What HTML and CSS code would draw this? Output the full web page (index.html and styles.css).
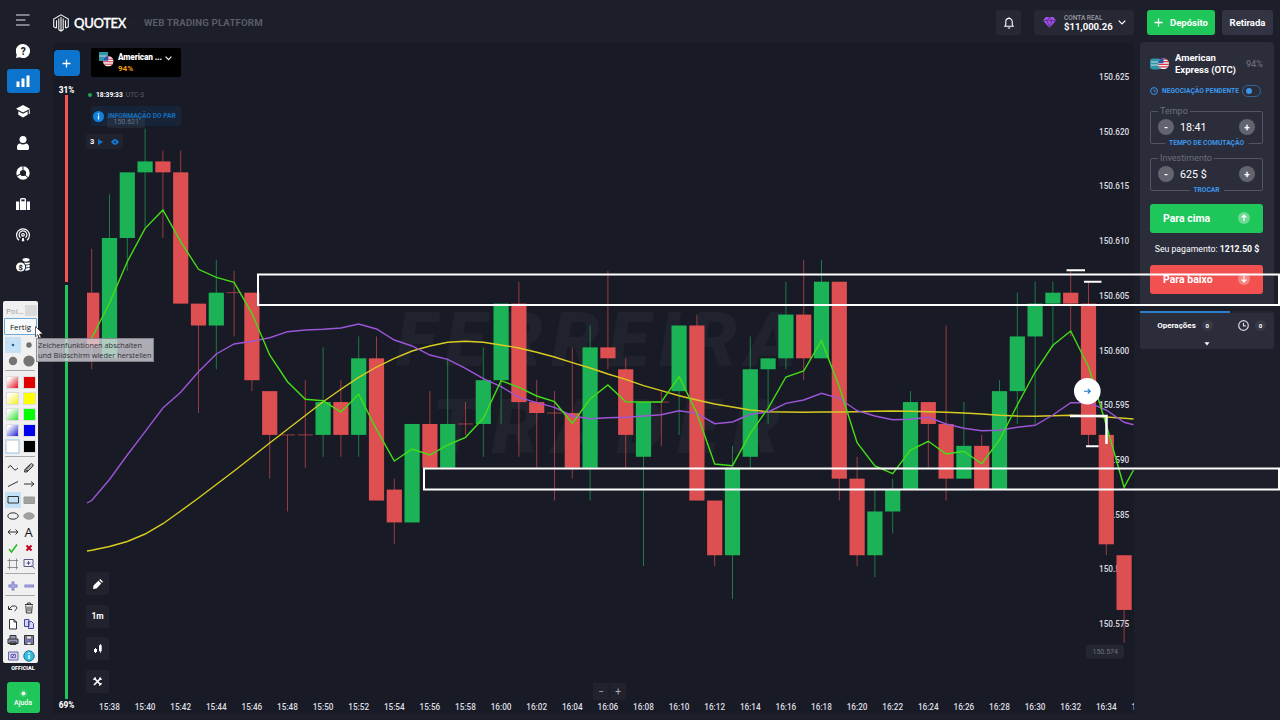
FILE: index.html
```html
<!DOCTYPE html>
<html lang="pt">
  <head>
    <meta charset="utf-8">
    <title>QUOTEX</title>
    <link rel="stylesheet" href="styles.css">
  </head>
  <body>
    <nav class="sidebar">
      <svg class="menuIcon" width="14" height="12" viewBox="0 0 14 12"><path d="M0 1h13.500M0 6h9.500M0 11h13.500" stroke="#e3e4e8" stroke-width="1.200"/></svg>
      <a class="navItem"><svg width="14" height="14" viewBox="0 0 14 14"><path d="M7 0a7 7 0 1 1-3.200 13.200L0 14l.7-3.500A7 7 0 0 1 7 0z" fill="#fff"/><text x="7.200" y="10.600" text-anchor="middle" class="glyph">?</text></svg></a>
      <a class="navItem active"><svg width="14" height="12" viewBox="0 0 14 12"><path d="M0.500 6.500h3V12h-3zM5.500 3.500h3V12h-3zM10.500 0.500h3V12h-3z" fill="#fff"/></svg></a>
      <a class="navItem"><svg width="14" height="13" viewBox="0 0 14 13"><path d="M7 0l7 3.800-7 3.800L0 3.800zM2.300 6.200L7 8.800l4.700-2.600v3.600L7 12.400 2.300 9.800zM12.800 4.500h1V9h-1z" fill="#fff"/></svg></a>
      <a class="navItem"><svg width="12" height="14" viewBox="0 0 12 14"><circle cx="6" cy="3.600" r="3.500" fill="#fff"/><path d="M0 11c0-2.300 1.500-3.600 3-3.600.9.700 1.900 1 3 1s2.100-.3 3-1c1.500 0 3 1.300 3 3.600v1.400c0 .9-.6 1.500-1.500 1.500h-9C.6 13.900 0 13.300 0 12.400z" fill="#fff"/></svg></a>
      <a class="navItem"><svg width="14" height="14" viewBox="0 0 14 14"><circle cx="7" cy="7" r="4.900" fill="none" stroke="#fff" stroke-width="3.600"/><path d="M7 0v4M8.500 8.500l3.800 3.300M4.800 8L.8 10" stroke="#1d1f2a" stroke-width="1"/></svg></a>
      <a class="navItem"><svg width="14" height="12" viewBox="0 0 14 12"><path d="M0 3.500h3V12H0zM3.800 3.500H4V1.500Q4 0 5.500 0h3Q10 0 10 1.500v2h.2V12H3.800zM11 3.500h3V12h-3z" fill="#fff"/><path d="M5.400 3.300V1.400h3.200v1.900z" fill="#1d1f2a"/></svg></a>
      <a class="navItem"><svg width="14" height="14" viewBox="0 0 14 14" fill="none" stroke="#fff" stroke-width="1.200"><path d="M3 12.200a6.400 6.400 0 1 1 8 0M4.500 9.800a3.900 3.900 0 1 1 5 0"/><circle cx="7" cy="6.800" r="1.300"/><path d="M5.700 13.300L6.200 10h1.600l.5 3.300z" fill="#fff" stroke="none"/></svg></a>
      <a class="navItem"><svg width="14" height="14" viewBox="0 0 14 14"><path d="M6.500 1.800C6.500.8 8.200 0 10 0s3.700.8 3.700 1.800-1.700 1.900-3.700 1.900-3.500-.9-3.500-1.900zM8 4.400c2 .6 4.300.4 5.700-.5v1.800c-1 .8-2.600 1-4.300.9zM10 7.500c1.500 0 2.800-.3 3.700-.8v1.800c-1 .7-2 .9-3.500.9zM10 10.300c1.500 0 2.800-.2 3.700-.8v2.100c-1 .8-2.600 1.200-4.600 1z" fill="#fff"/><circle cx="4.600" cy="9" r="4.600" fill="#fff"/><text x="4.600" y="11.700" text-anchor="middle" class="glyph small">$</text></svg></a>
      <span class="official">OFFICIAL</span>
      <button class="helpButton"><svg width="9" height="9" viewBox="0 0 9 9"><circle cx="4.500" cy="4.500" r="2" fill="#fff"/><circle cx="4.500" cy="4.500" r="3.300" fill="none" stroke="#8fe3ae" stroke-width=".7" stroke-dasharray="1 1"/></svg>Ajuda</button>
    </nav>

    <div class="main">
      <header class="topbar">
        <svg width="16" height="18" viewBox="0 0 16 18" fill="none" stroke="#f2f2f4" stroke-width="1.100"><path d="M3 14L.7 12.700V5L8 .8 15.300 5v7.700L13 14M3.500 6.300v8M5.800 4.500v11M8 3v13.800M10.200 4.500v11M12.500 6.300v8M5.500 15.500L8 17l2.500-1.500"/></svg>
        <span class="brand">QUOTEX</span>
        <span class="dot">·</span>
        <span class="tagline">WEB TRADING PLATFORM</span>
        <button class="bell"><svg width="10" height="12" viewBox="0 0 10 12" fill="none" stroke="#fff" stroke-width="1.100"><path d="M.8 9.200h8.400L8.200 7.700V4.600a3.200 3.200 0 0 0-6.400 0v3.100zM3.800 11h2.400M5 .3v1"/></svg></button>
        <div class="account">
          <svg width="13" height="11" viewBox="0 0 13 11"><path d="M2.700 0h7.600L13 3.600 6.500 11 0 3.600z" fill="#a04fe8"/><path d="M0 3.600h13M4.200 3.600L6.500 11l2.300-7.400L6.500 0z" fill="none" stroke="#4b2a75" stroke-width=".7"/></svg>
          <div class="balance"><small>CONTA REAL</small><b>$11,000.26</b></div>
          <svg width="8" height="5" viewBox="0 0 8 5"><path d="M.7.7L4 4 7.300.7" fill="none" stroke="#fff" stroke-width="1.200"/></svg>
        </div>
        <button class="deposit"><svg width="9" height="9" viewBox="0 0 9 9"><path d="M4.500.5v8M.5 4.500h8" stroke="#fff" stroke-width="1.300"/></svg>Depósito</button>
        <button class="withdraw">Retirada</button>
      </header>

      <div class="content">
        <section class="chartArea">
          <div class="sentiment">
            <button class="addTab"><svg width="9" height="9" viewBox="0 0 9 9"><path d="M4.500.5v8M.5 4.500h8" stroke="#fff" stroke-width="1.300"/></svg></button>
            <b>31%</b>
            <div class="barDown"></div>
            <div class="barUp"></div>
            <b>69%</b>
          </div>
          <svg id="chart" class="chart" width="1054" height="671" viewBox="80 43 1054 671"></svg>

          <div class="chartInfo">
            <div class="assetTab">
              <svg width="16" height="16" viewBox="0 0 16 16"><use href="#assetIcon"/></svg>
              <div><b>American ...</b><em>94%</em></div>
              <svg width="7" height="5" viewBox="0 0 7 5"><path d="M.6.7l2.900 2.900L6.400.7" fill="none" stroke="#fff" stroke-width="1.100"/></svg>
            </div>
            <div class="clock"><i></i><b>18:39:33</b> UTC-3</div>
            <div class="pairInfo"><svg width="11" height="11" viewBox="0 0 11 11"><circle cx="5.500" cy="5.500" r="5.500" fill="#1380dc"/><path d="M5.500 2.300v1.300M5.500 4.600v3.900" stroke="#fff" stroke-width="1.300"/></svg><span>INFORMAÇÃO DO PAR</span></div>
            <div class="indicators"><b>3</b><svg width="5" height="6" viewBox="0 0 5 6"><path d="M0 0l5 3-5 3z" fill="#1376ce"/></svg><svg width="8" height="6" viewBox="0 0 8 6"><path d="M0 3q4-6 8 0-4 6-8 0z" fill="#1376ce"/><circle cx="4" cy="3" r="1.100" fill="#1b2434"/></svg></div>
          </div>

          <div class="chartTools">
            <button><svg width="10" height="10" viewBox="0 0 10 10"><path d="M0 10l.5-3.500L5.400 1.700l2.800 2.800L3.500 9.500zM6.200 1L7.200 0 10 2.800l-1 1z" fill="#fff"/></svg></button>
            <button>1m</button>
            <button><svg width="8" height="9" viewBox="0 0 8 9"><path d="M0 5h3v3H0zM5 1.200h2.700v6H5zM1 4h1v5H1zM6 0h.8v8.800H6z" fill="#fff"/></svg></button>
            <button><svg width="9" height="9" viewBox="0 0 9 9"><path d="M1 1l7 7M8 1L1 8" stroke="#fff" stroke-width="1.700"/><path d="M0 2.500l2.500-.3L2.300 0M9 2.500L6.700 2.200 7 0M6.500 9l.3-2.500L9 6.500" stroke="#fff" fill="none" stroke-width=".8"/></svg></button>
          </div>
          <div class="zoomButtons"><button>−</button><button>+</button></div>
        </section>

        <aside class="side">
          <div class="tradePanel">
            <div class="asset">
              <svg width="20" height="14" viewBox="0 0 20 14"><rect y="1.500" width="11" height="11" rx="3" fill="#3295a6"/><path d="M1 5h7M1 8h7" stroke="#bfe0e4" stroke-width="1"/><g transform="translate(8 1.300)"><use href="#flag"/></g></svg>
              <b>American<br>Express (OTC)</b>
              <span>94%</span>
            </div>
            <div class="pending"><svg width="8" height="8" viewBox="0 0 8 8" fill="none" stroke="#3b97ea"><circle cx="4" cy="4" r="3.400"/><path d="M4 2v2.300h1.700" stroke-width=".8"/></svg><span>NEGOCIAÇÃO PENDENTE</span><i class="toggle"></i></div>
            <fieldset class="field">
              <legend>Tempo</legend>
              <button>-</button><span>18:41</span><button>+</button>
              <a>TEMPO DE COMUTAÇÃO</a>
            </fieldset>
            <fieldset class="field">
              <legend>Investimento</legend>
              <button>-</button><span>625 $</span><button>+</button>
              <a>TROCAR</a>
            </fieldset>
            <button class="trade up">Para cima<svg width="12" height="12" viewBox="0 0 12 12"><circle cx="6" cy="6" r="6" fill="#fff" opacity=".35"/><path d="M6 9.200V3.200M3.600 5.500L6 3.100l2.400 2.400" fill="none" stroke="#fff" stroke-width="1.200"/></svg></button>
            <p class="payout">Seu pagamento: <b>1212.50 $</b></p>
            <button class="trade down">Para baixo<svg width="12" height="12" viewBox="0 0 12 12"><circle cx="6" cy="6" r="6" fill="#fff" opacity=".3"/><path d="M6 2.800v6M3.600 6.500L6 8.900l2.400-2.400" fill="none" stroke="#fff" stroke-width="1.200"/></svg></button>
          </div>
          <div class="operations">
            <div class="tabs">
              <div class="tab selected">Operações <i>0</i></div>
              <div class="tab"><svg width="11" height="11" viewBox="0 0 11 11" fill="none" stroke="#d8d9de" stroke-width="1.200"><circle cx="5.500" cy="5.500" r="4.800"/><path d="M5.500 2.800v3h2.300"/></svg><i>0</i></div>
            </div>
            <svg width="6" height="4" viewBox="0 0 6 4"><path d="M.5.300h5L3 3.600z" fill="#fff"/></svg>
          </div>
        </aside>
      </div>
    </div>

    <!-- shapes drawn with the pointer tool, over everything -->
    <svg class="drawing" width="1280" height="720" fill="none" stroke="#fff" stroke-width="2">
      <rect x="258" y="274.500" width="1021" height="30.500"/>
      <rect x="424" y="468.500" width="855" height="21"/>
      <path d="M1066.500 270.300h18.500M1084 281.700h17.500M1086 446.300h12.500"/>
      <path d="M1070 416h36.500v28" stroke-width="2.500"/>
    </svg>

    <div class="pointerTool">
      <div class="title"><span>Poi...</span><i></i></div>
      <div class="fertig">Fertig</div>
      <div class="cells dots">
        <i class="picked"><svg viewBox="0 0 16 16"><circle cx="8" cy="8" r="1.300" fill="#27628f"/></svg></i>
        <i><svg viewBox="0 0 16 16"><circle cx="8" cy="8" r="2.700" fill="#6f6f6f"/></svg></i>
        <i><svg viewBox="0 0 16 16"><circle cx="8" cy="8" r="4.200" fill="#747474"/></svg></i>
        <i><svg viewBox="0 0 16 16"><circle cx="8" cy="8" r="5.600" fill="#747474"/></svg></i>
      </div>
      <hr>
      <div class="cells swatches">
        <i class="fadeRed"></i><i class="red"></i>
        <i class="fadeYellow"></i><i class="yellow"></i>
        <i class="fadeGreen"></i><i class="green"></i>
        <i class="fadeBlue"></i><i class="blue"></i>
        <i class="white"></i><i class="black"></i>
      </div>
      <hr>
      <div class="cells icons">
        <i><svg viewBox="0 0 16 16"><path d="M3 8q2-4 4-1t3 3 3-2"/></svg></i>
        <i><svg viewBox="0 0 16 16"><path d="M3.500 12L4 9.500 9.500 4q1-1 2 0t.5 2L6 12zM4 9.500l3 1.500M9 5L5.500 9" fill="#b5b5b5"/></svg></i>
        <i><svg viewBox="0 0 16 16"><path d="M3 10.500l10-5"/></svg></i>
        <i><svg viewBox="0 0 16 16"><path d="M3 8h10M10 5.500L13 8l-3 2.500"/></svg></i>
        <i class="picked"><svg viewBox="0 0 16 16"><path d="M3 4.500h10.500v6.500H3z"/></svg></i>
        <i><svg viewBox="0 0 16 16"><path d="M3 5h10.500v6.500H3z" fill="#a0a0a0" stroke="#999"/></svg></i>
        <i><svg viewBox="0 0 16 16"><ellipse cx="8" cy="8" rx="5.200" ry="3.200"/></svg></i>
        <i><svg viewBox="0 0 16 16"><ellipse cx="8" cy="8" rx="5.200" ry="3.200" fill="#a0a0a0" stroke="#999"/></svg></i>
        <i><svg viewBox="0 0 16 16"><path d="M3 8h10M5.500 5.500L3 8l2.500 2.500M10.500 5.500L13 8l-2.500 2.500"/></svg></i>
        <i class="letter">A</i>
        <i><svg viewBox="0 0 16 16"><path d="M4 9l2.500 3L12 4.500" stroke="#20bb20" stroke-width="1.500"/></svg></i>
        <i><svg viewBox="0 0 16 16"><path d="M5.500 5.500l5 5M10.500 5.500l-5 5" stroke="#c00020" stroke-width="2"/></svg></i>
        <i><svg viewBox="0 0 16 16"><path d="M2.500 11.500h10.500M2.500 4.500h10.500M4.500 2.500v11M11.500 2.500v11" stroke="#777" stroke-width=".8"/></svg></i>
        <i><svg viewBox="0 0 16 16"><path d="M3 3.500h9v7H3zM10.500 9.500l3 3" stroke="#5a5a88"/><path d="M7.500 5.200v3.600M5.700 7h3.600" stroke="#4040a0"/></svg></i>
      </div>
      <hr>
      <div class="cells icons one">
        <i><svg viewBox="0 0 16 16"><path d="M8 3.500v9M3.500 8h9" stroke="#7272bd" stroke-width="2.800"/><path d="M8 4.300v7.400M4.300 8h7.400" stroke="#bfbff2"/></svg></i>
        <i><svg viewBox="0 0 16 16"><path d="M3.500 8h9.500" stroke="#7272bd" stroke-width="2.800"/><path d="M4.300 8h7.900" stroke="#bfbff2"/></svg></i>
      </div>
      <hr>
      <div class="cells icons last">
        <i><svg viewBox="0 0 16 16"><path d="M3.500 6v3.500H7M4 9q3-4.500 6.500-3 3 2-1 5"/></svg></i>
        <i><svg viewBox="0 0 16 16"><path d="M4 4.500h8M6.500 4.500V3h3v1.500M4.800 5.500l.6 7.500h5.200l.6-7.500M7 6.500v5M9 6.500v5"/></svg></i>
        <i><svg viewBox="0 0 16 16"><path d="M4.500 3.500H9L11.500 6v7h-7zM9 3.500V6h2.500" fill="#fff"/></svg></i>
        <i><svg viewBox="0 0 16 16"><path d="M3.500 3.500H8v7H3.500zM7.500 5.500h3l2 2v5h-5z" fill="#d6d6f4" stroke="#4646a0"/></svg></i>
        <i><svg viewBox="0 0 16 16"><path d="M5 7V3.500h6V7M3 7h10v4.500H3zM5 10h6v2.500H5z" fill="#9696b8"/></svg></i>
        <i><svg viewBox="0 0 16 16"><path d="M3.500 3.500h9v9h-9z" fill="#7a7ab8"/><path d="M5.500 4h5v3h-5zM6 10h4v2.500H6z" fill="#e8e8e8" stroke-width=".5"/></svg></i>
        <i><svg viewBox="0 0 16 16"><path d="M3.500 4h9.500v8H3.500z" fill="#d5d5ef" stroke="#6565a5"/><path d="M6 6.500h4.500v3H6zM7 9l3-3" stroke="#4646a0" stroke-width=".8"/></svg></i>
        <i><svg viewBox="0 0 16 16"><circle cx="8" cy="8" r="5.200" fill="#35bce0" stroke="#16779a"/><path d="M8 4.500V6M8 7v4" stroke="#fff" stroke-width="1.400"/></svg></i>
      </div>
    </div>
    <div class="hint">Zeichenfunktionen abschalten<br>und Bildschirm wieder herstellen</div>
    <svg class="cursor" width="9" height="13" viewBox="0 0 9 13"><path d="M.5.500v10.300l2.400-2.200 1.600 3.700 1.700-.7-1.600-3.600h3.400z" fill="#fff" stroke="#222" stroke-width=".7"/></svg>

    <svg width="0" height="0" class="defs">
      <defs>
        <clipPath id="round"><circle cx="5.500" cy="5.500" r="5.500"/></clipPath>
        <g id="flag" clip-path="url(#round)"><path d="M0 0h11v11H0z" fill="#f4f0f2"/><path d="M0 .8h11M0 3.400h11M0 6h11M0 8.600h11" stroke="#d8344a" stroke-width="1.200"/><path d="M0 0h5.500v5H0z" fill="#2c56a5"/></g>
        <g id="assetIcon"><path d="M1 0h9v9H1z" fill="#3295a6"/><path d="M1.500 4h7" stroke="#bfe0e4"/><g transform="translate(5 4) scale(.96)"><use href="#flag"/></g></g>
      </defs>
    </svg>

    <script src="chart.js"></script>
  </body>
</html>
```
FILE: styles.css
```css
*{
  box-sizing: border-box;
}

body{
  margin: 0;
  width: 1280px;
  height: 720px;
  overflow: hidden;
  display: flex;
  background: #1c1e2a;
  color: #fff;
  font-family: Roboto, sans-serif;
  font-size: 9px;
}

button{
  border: 0;
  padding: 0;
  color: #fff;
  font-family: inherit;
  display: flex;
  align-items: center;
  justify-content: center;
}

i, em{
  font-style: normal;
}

svg{
  display: block;
  flex: none;
}

.defs{
  position: absolute;
}

/* left menu */
.sidebar{
  width: 46px;
  height: 720px;
  flex: none;
  display: flex;
  flex-direction: column;
  align-items: center;
  padding-top: 14px;
}

.menuIcon{
  margin-bottom: 12.500px;
}

.navItem{
  width: 33px;
  height: 24px;
  margin-bottom: 6.700px;
  border-radius: 3px;
  display: flex;
  align-items: center;
  justify-content: center;
}

.navItem.active{
  background: #0d74cd;
}

.glyph{
  font-size: 10px;
  font-weight: 900;
  fill: #1d1f2a;
}

.glyph.small{
  font-size: 7.500px;
}

.official{
  margin-top: auto;
  font-size: 5.500px;
  line-height: 8px;
  font-weight: 900;
}

.helpButton{
  width: 33px;
  height: 31px;
  margin: 10px 0 7px;
  border-radius: 3px;
  background: #1fc75b;
  flex-direction: column;
  gap: 1px;
  font-size: 7px;
  font-weight: 500;
}

.main{
  flex: 1;
  display: flex;
  flex-direction: column;
  padding-left: 7px;
}

/* header */
.topbar{
  height: 43px;
  flex: none;
  display: flex;
  align-items: center;
  padding: 2px 7px 0 0;
}

.brand{
  margin-left: 5px;
  width: 49px;
  font-family: Lato, sans-serif;
  font-size: 13px;
  font-weight: 500;
  letter-spacing: -.3px;
  -webkit-text-stroke: .35px #fff;
}

.dot{
  width: 21px;
  text-align: center;
  color: #454753;
}

.tagline{
  color: #5a5c66;
  font-size: 9.700px;
  font-weight: 700;
  letter-spacing: .13px;
}

.bell, .account, .deposit, .withdraw{
  height: 25px;
  border-radius: 3px;
  background: #262834;
}

.bell{
  width: 25px;
  margin-left: auto;
}

.account{
  width: 100px;
  margin: 0 13px 0 13px;
  padding: 0 8px 0 9px;
  display: flex;
  align-items: center;
}

.balance{
  width: 55px;
  margin-left: 8px;
  display: flex;
  flex-direction: column;
  white-space: nowrap;
}

.balance small{
  color: #9b9ca5;
  font-size: 6.500px;
  line-height: 8px;
  font-weight: 500;
}

.balance b{
  font-size: 9.500px;
  line-height: 10px;
}

.deposit{
  width: 68px;
  margin-right: 7px;
  gap: 7px;
  background: #1fc75b;
  font-size: 9.500px;
  font-weight: 700;
}

.withdraw{
  width: 51px;
  background: #323443;
  font-size: 9.500px;
  font-weight: 700;
}

.content{
  display: flex;
  flex: 1;
}

/* chart */
.chartArea{
  position: relative;
  width: 1081px;
  height: 671px;
  display: flex;
  background: #181a25;
}

.sentiment{
  width: 27px;
  padding-top: 7px;
  display: flex;
  flex-direction: column;
  align-items: center;
  font-size: 8.300px;
  line-height: 10px;
}

.sentiment b{
  font-weight: 800;
}

.addTab{
  width: 26px;
  height: 26px;
  margin-bottom: 9px;
  border-radius: 4px;
  background: #0d74cd;
  flex: none;
}

.barDown{
  width: 3px;
  height: 187px;
  background: #f55555;
}

.barUp{
  width: 3px;
  height: 414px;
  margin: 3px 0 1px;
  background: #1fc75b;
}

.chart .axis{
  fill: #dddee2;
  font-size: 8.200px;
  font-weight: 500;
}

.chart .tag{
  fill: #70727c;
  font-size: 7px;
}

.chart .watermark{
  fill: #20222d;
  font-size: 76px;
  font-weight: 900;
  font-style: italic;
}

.chart polyline{
  fill: none;
  stroke-width: 1.400;
}

.chartInfo{
  position: absolute;
  left: 33px;
  top: 5px;
}

.assetTab{
  width: 90px;
  height: 29px;
  margin-left: 5px;
  padding: 4px 0 0 7px;
  border-radius: 2px;
  background: #000;
  display: flex;
}

.assetTab div{
  width: 47px;
  margin-left: 4px;
  display: flex;
  flex-direction: column;
  line-height: 11px;
  font-size: 8.300px;
  white-space: nowrap;
}

.assetTab b{
  font-weight: 900;
  letter-spacing: -.15px;
}

.assetTab em{
  color: #f59a0c;
  font-size: 8px;
  font-weight: 700;
}

.assetTab > svg:last-child{
  margin-top: 4px;
}

.clock{
  display: flex;
  align-items: center;
  gap: 3px;
  height: 8px;
  margin: 14px 0 0 2px;
  font-size: 6.700px;
  color: #5c5e69;
  white-space: nowrap;
}

.clock i{
  width: 4px;
  height: 4px;
  margin-right: 1px;
  border-radius: 2px;
  background: #1fa653;
}

.clock b{
  color: #fff;
}

.pairInfo{
  width: 90px;
  height: 20px;
  margin: 7px 0 0 5px;
  padding-left: 2px;
  display: flex;
  align-items: center;
  gap: 4px;
  border-radius: 3px;
  background: rgba(19, 128, 220, .1);
  color: #136fbe;
  font-size: 6.700px;
  font-weight: 700;
  white-space: nowrap;
}

.indicators{
  width: 37px;
  height: 15px;
  margin-top: 8px;
  padding-left: 4px;
  display: flex;
  align-items: center;
  gap: 4px;
  border-radius: 2px;
  background: #20222d;
  font-size: 7.500px;
}

.indicators svg:last-child{
  margin-left: 4px;
}

.chartTools{
  position: absolute;
  left: 33px;
  top: 529px;
  display: flex;
  flex-direction: column;
  gap: 9.600px;
}

.chartTools button{
  width: 23px;
  height: 23px;
  border-radius: 2px;
  background: #20222d;
  font-size: 8.500px;
  font-weight: 700;
}

.zoomButtons{
  position: absolute;
  left: 540px;
  top: 640px;
  display: flex;
  gap: 1px;
}

.zoomButtons button{
  width: 16px;
  height: 17px;
  background: #20222d;
  color: #b0b1b8;
  font-size: 10px;
}

/* right panel */
.side{
  margin: -1px 0 0 6px;
  width: 134px;
}

.tradePanel{
  height: 263px;
  padding: 9px 10px 0;
  border-radius: 4px;
  background: #2b2d3b;
}

.asset{
  display: flex;
  align-items: center;
  height: 25px;
  font-size: 9.500px;
  line-height: 12px;
}

.asset b{
  margin-left: 5px;
  width: 71px;
  white-space: nowrap;
}

.asset span{
  color: #696b75;
  font-weight: 500;
  font-size: 9px;
}

.pending{
  height: 12px;
  margin-top: 9px;
  display: flex;
  align-items: center;
  gap: 4px;
  color: #3b97ea;
  font-size: 6.700px;
  font-weight: 700;
  white-space: nowrap;
}

.toggle{
  width: 19px;
  height: 12px;
  margin-left: -1px;
  padding: 2px 3px;
  flex: none;
  border: 1px solid #336496;
  border-radius: 6px;
}

.toggle::before{
  content: "";
  display: block;
  width: 6px;
  height: 6px;
  border-radius: 50%;
  background: #3b97ea;
}

.field{
  position: relative;
  width: 113px;
  height: 38px;
  min-width: 0;
  margin: 9px 0 0;
  padding: 0 7px 5px 7px;
  border: 1px solid #535562;
  border-radius: 2px;
  display: flex;
  align-items: center;
}

.field legend{
  height: 10px;
  padding: 0 2px;
  color: #6d6f7a;
  font-size: 9px;
  line-height: 10px;
}

.field button{
  width: 16px;
  height: 16px;
  border-radius: 50%;
  background: #62646f;
  font-size: 10px;
  font-weight: 700;
}

.field span{
  flex: 1;
  padding-left: 6px;
  font-size: 10.700px;
}

.field a{
  position: absolute;
  bottom: -5px;
  left: 50%;
  transform: translateX(-50%);
  padding: 0 4px;
  background: #2b2d3b;
  color: #3b97ea;
  font-size: 6.700px;
  line-height: 9px;
  font-weight: 700;
  white-space: nowrap;
}

.trade{
  width: 113px;
  height: 29px;
  padding: 0 13px;
  border-radius: 3px;
  justify-content: space-between;
  font-size: 10.500px;
  font-weight: 700;
}

.up{
  margin-top: 12.500px;
  background: #1fc75b;
}

.down{
  background: #f2514f;
}

.payout{
  margin: 0;
  line-height: 32px;
  text-align: center;
  font-size: 8.700px;
  white-space: nowrap;
}

.operations{
  height: 38px;
  margin-top: 6px;
  border-radius: 3px;
  background: #2b2d3b;
}

.tabs{
  display: flex;
  height: 26px;
}

.tab{
  width: 44px;
  border-top: 2px solid #232531;
  display: flex;
  align-items: center;
  justify-content: center;
  gap: 6px;
  font-size: 8px;
  font-weight: 700;
}

.tab.selected{
  width: 90px;
  border-color: #2d7fcb;
}

.tab i{
  width: 11px;
  height: 11px;
  border-radius: 6px;
  background: #383a47;
  font-size: 6px;
  line-height: 11px;
  text-align: center;
}

.operations > svg{
  margin: 5px auto 0;
}

/* drawing layer and its tool window */
.drawing{
  position: absolute;
  left: 0;
  top: 0;
}

.pointerTool{
  position: absolute;
  left: 3px;
  top: 301px;
  width: 35px;
  height: 362px;
  padding: 0 1px;
  background: #f0f0f0;
  border-radius: 2px;
  color: #111;
}

.title{
  height: 17px;
  padding: 1px 0 0 2px;
  display: flex;
  justify-content: space-between;
  align-items: center;
  color: #999;
  font: 8px "Open Sans", sans-serif;
}

.title i{
  width: 12px;
  height: 11px;
  background: #d9d9d9;
}

.fertig{
  height: 17px;
  border: 1px solid #6fa9d6;
  border-radius: 1px;
  background: #f7f9fb;
  font: 8px/15px "Open Sans", sans-serif;
  text-align: center;
}

.cells{
  display: grid;
  grid-template-columns: 16px 16px;
  grid-auto-rows: 16px;
  padding-top: 2px;
  padding-left: .500px;
}

.cells svg{
  width: 16px;
  height: 16px;
}

.pointerTool hr{
  height: 1px;
  margin: 1px 2px 1px 1px;
  border: 0;
  background: #a8a8a8;
}

.cells.swatches{
  padding-top: 3px;
}

.swatches i{
  width: 13px;
  height: 13px;
  margin: 1px;
  border: 1px solid #ddd;
}

.swatches i:nth-child(even){
  margin-left: 2px;
}

.fadeRed{ background: linear-gradient(135deg, #fff 15%, #e01020); }
.red{ background: #e00000; }
.fadeYellow{ background: linear-gradient(135deg, #fff 15%, #f5f020); }
.yellow{ background: #ff0; }
.fadeGreen{ background: linear-gradient(135deg, #fff 15%, #30e030); }
.green{ background: #0f0; }
.fadeBlue{ background: linear-gradient(135deg, #fff 15%, #2020d0); }
.blue{ background: #00e; }
.white{ background: #fff; outline: 1px solid #b8dcf5; }
.black{ background: #000; }

.picked{
  background: #c4e1f6;
}

.icons svg{
  fill: none;
  stroke: #333;
}

.icons .letter{
  font: 13px/16px "Open Sans", sans-serif;
  text-align: center;
}

.cells.one, .cells.last{
  padding-top: 3px;
}

.hint{
  position: absolute;
  left: 36px;
  top: 338px;
  width: 118px;
  height: 24px;
  padding: 1px 1px;
  border: 1px solid rgba(120, 120, 125, .8);
  background: rgba(215, 213, 220, .78);
  color: #33323a;
  font: 7.400px/10px "Open Sans", sans-serif;
  white-space: nowrap;
}

.cursor{
  position: absolute;
  left: 35px;
  top: 326px;
}
```
FILE: chart.js
```javascript
const chart = document.getElementById("chart");
const STEP = 17.8;
const FIRST_X = 91.7;

// one tick (0.001) is 10.94px high, level 0 is the top of the first peak
const level = k => 161.4 + k * 10.94;
const candleX = i => FIRST_X + i * STEP;

// direction, body top, body bottom, high, low (in ticks)
const candles = [
  ["d",12,17,8,19],["u",7,18,3,18],["u",1,7,1,10],["u",0,1,-3,6],["d",0,1,-1,7],
  ["d",1,13,-1,13],["d",13,15,13,23],["u",12,15,9,19],["d",12,12,10,16],["d",12,20,12,21],
  ["d",21,25,21,29],["d",25,25,25,32],["d",25,25,20,28],["u",22,25,17,27],["d",22,25,20,27],
  ["u",18,25,16,27],["d",18,31,16,31],["d",30,33,29,35],["u",24,33,24,33],["d",24,28,21,28],
  ["u",24,28,18,28],["d",24,24,22,25],["u",20,24,17,27],["u",13,20,13,24],["d",13,22,11,27],
  ["d",22,23,20,28],["d",23,23,21,31],["d",23,28,17,29],["u",17,28,15,31],["d",17,18,10,19],
  ["d",18,25,18,28],["u",22,27,22,37],["d",22,22,21,26],["u",15,21,15,25],["d",15,31,14,31],
  ["d",31,36,31,37],["u",28,36,26,40],["u",19,27,16,28],["u",18,19,18,24],["u",14,18,11,19],
  ["d",14,18,9,20],["u",11,18,9,18],["d",11,29,11,31],["d",29,36,27,37],["u",32,36,30,38],
  ["u",30,32,29,34],["u",22,30,21,30],["d",22,24,22,28],["d",24,29,15,31],["u",26,29,22,29],
  ["d",26,30,25,30],["u",21,30,20,30],["u",16,21,12,24],["u",13,16,11,24],["u",12,13,11,17],
  ["d",12,13,10,16],["d",13,25,11,26],["d",25,35,25,36],["d",36,41,36,44]
];
candles[30][1] = 19;

const fast = [338,303,261.7,228.3,210,241.7,269.3,277.3,282.3,313.3,355,381.7,399.3,400.7,412,
  394.3,429.3,461,449,455,445,437.3,418.3,380.7,387.3,396,401.7,423.3,399,385,401.7,402,402,
  376.7,413.3,464,465.7,433.3,408.3,377,371,340.7,386.7,442.7,466,473.7,450,441.3,454,451.3,
  463.7,440,405,372,345.3,331,366.7,425,487.3];
const middle = [500.5,479.5,455,431.7,408,392.3,371.7,354,344,341.3,337.7,331.7,330,329.3,328,
  324,329,340,346,355,359.3,368.3,378.7,386.7,397.3,402.7,407.3,416,418.7,417.7,417.3,416,414.7,
  410.7,413.3,423.7,422,414.3,412,403.3,400,393.3,398.3,410.7,416,419.7,419.3,417.3,424,428.3,
  430.7,430.3,427.3,425.3,415,402.7,402.7,410,422.3];
const slow = [550.3,546.5,541.5,534,523.7,511,498,484.5,471,457,443,429.3,415.5,401.7,389.3,
  377.3,367,358.3,351,346,342.3,341.3,342.3,345,348,352.3,357,362.7,368,374,379.3,385.7,390.7,
  395.7,400,404,407,410,411.7,412,412.3,412,412,411.7,411.3,411,411.3,411.7,412.3,413,414,415.3,
  416,416.3,415.7,415.3,415.7,417,418.3];

let html = "";

html += '<text class="watermark" x="396" y="366" textLength="400">FERREIRA</text>';
html += '<text class="watermark" x="432" y="453" textLength="348">TRADER</text>';

for(let i = 0; i <= 10; i++){
  html += `<text class="axis" x="1099" y="${80 + i * 54.7}">${(150.625 - i * 0.005).toFixed(3)}</text>`;
}
for(let m = 0; m <= 29; m++){
  let minutes = 15 * 60 + 38 + m * 2;
  let label = `${Math.floor(minutes / 60)}:${String(minutes % 60).padStart(2, "0")}`;
  html += `<text class="axis" text-anchor="middle" x="${candleX(1 + m * 2)}" y="710">${label}</text>`;
}

// high and low tags
html += '<rect x="107" y="115" width="38" height="13" rx="2" fill="#242631"/>';
html += '<text class="tag" x="113.500" y="123.500">150.621</text>';

candles.forEach(([dir, top, bottom, high, low], i) => {
  let x = candleX(i);
  let color = dir === "u" ? "#1bb356" : "#dd4f50";
  let left = Math.max(x - 7.6, 87);
  html += `<path d="M${x} ${level(high)}V${level(low)}" stroke="${color}" stroke-width="1" opacity=".65"/>`;
  if(top === bottom){
    html += `<path d="M${x - 7.5} ${level(top)}h15" stroke="${color}" stroke-width="1" opacity=".65"/>`;
  } else {
    html += `<rect x="${left}" y="${level(top)}" width="${x + 7.6 - left}" height="${level(bottom) - level(top)}" fill="${color}"/>`;
  }
});

function line(values, color, startY, endY){
  let points = values.map((y, i) => `${candleX(i)},${y}`);
  if(startY) points.unshift(`87,${startY}`);
  points.push(`1133.500,${endY}`);
  html += `<polyline points="${points.join(" ")}" stroke="${color}"/>`;
}
line(slow, "#d9cc20", 551, 419);
line(middle, "#9d55d8", 503, 424.7);
line(fast, "#45dd18", null, 470);

html += '<circle cx="1087.300" cy="391.200" r="13.300" fill="#fff"/>';
html += '<path d="M1084 391.200h6M1087.800 388.800l2.400 2.400-2.400 2.400" fill="none" stroke="#1376ce" stroke-width="1.100"/>';
html += '<rect x="1086" y="644.500" width="38" height="14" rx="3" fill="#242631"/>';
html += '<text class="tag" x="1092.500" y="654">150.574</text>';

chart.innerHTML = html;
```
